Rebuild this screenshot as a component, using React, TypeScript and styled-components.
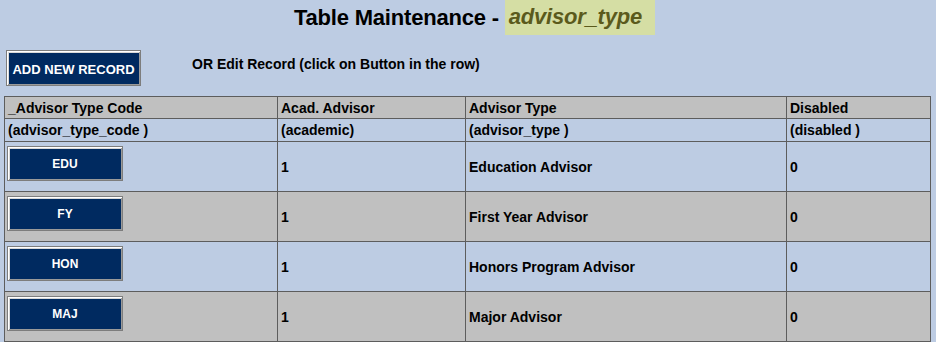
import { styled, createGlobalStyle } from 'styled-components';

const GlobalStyle = createGlobalStyle`
  html, body {
    margin: 0;
    padding: 0;
    background: #bdcce3;
    font-family: 'Liberation Sans', Arial, sans-serif;
  }
`;

type Row = { code: string; academic: string; type: string; disabled: string };

const rows: Row[] = [
  { code: 'EDU', academic: '1', type: 'Education Advisor', disabled: '0' },
  { code: 'FY', academic: '1', type: 'First Year Advisor', disabled: '0' },
  { code: 'HON', academic: '1', type: 'Honors Program Advisor', disabled: '0' },
  { code: 'MAJ', academic: '1', type: 'Major Advisor', disabled: '0' },
];

export default function App() {
  return (
    <>
      <GlobalStyle />
      <Page>
        <Title>
          Table Maintenance - <TableName>advisor_type</TableName>
        </Title>
        <Actions>
          <AddButton>ADD NEW RECORD</AddButton>
          <Hint>OR Edit Record (click on Button in the row)</Hint>
        </Actions>
        <Grid>
          <colgroup>
            <col style={{ width: 273 }} />
            <col style={{ width: 188 }} />
            <col style={{ width: 321 }} />
            <col style={{ width: 144 }} />
          </colgroup>
          <thead>
            <Tr $gray>
              <Th>_Advisor Type Code</Th>
              <Th>Acad. Advisor</Th>
              <Th>Advisor Type</Th>
              <Th>Disabled</Th>
            </Tr>
            <Tr>
              <Th $sub>(advisor_type_code )</Th>
              <Th $sub>(academic)</Th>
              <Th $sub>(advisor_type )</Th>
              <Th $sub>(disabled )</Th>
            </Tr>
          </thead>
          <tbody>
            {rows.map((r, i) => (
              <Tr key={r.code} $gray={i % 2 === 1}>
                <ButtonCell>
                  <RowButton>{r.code}</RowButton>
                </ButtonCell>
                <Td>{r.academic}</Td>
                <Td>{r.type}</Td>
                <Td>{r.disabled}</Td>
              </Tr>
            ))}
          </tbody>
        </Grid>
      </Page>
    </>
  );
}

const Page = styled.div`
  width: 936px;
  height: 342px;
  overflow: hidden;
  padding: 0 0 0 4px;
  box-sizing: border-box;
`;

const Title = styled.h1`
  margin: 0;
  height: 36px;
  display: flex;
  justify-content: center;
  align-items: center;
  padding-left: 9px;
  font-size: 22px;
  font-weight: bold;
  letter-spacing: -0.2px;
  color: #000;
  white-space: pre;
`;

const TableName = styled.span`
  display: flex;
  align-items: center;
  height: 36px;
  padding: 0 13px 0 4px;
  margin-top: -2px;
  background: #d5dea4;
  color: #5b5a1c;
  font-style: italic;
`;

const Actions = styled.div`
  display: flex;
  align-items: center;
  margin-top: 14px;
  height: 36px;
`;

const AddButton = styled.button`
  width: 135px;
  height: 36px;
  margin-left: 2px;
  padding: 2px 0 0 0;
  background: #002a60;
  color: #fff;
  font-family: 'Liberation Sans', Arial, sans-serif;
  font-size: 13px;
  font-weight: bold;
  border: 1px solid #7d7d7d;
  box-shadow: inset 1px 1px 0 #fff, inset -1px -1px 0 #9a9a9a, inset 2px 2px 0 #d8d8d8;
`;

const Hint = styled.span`
  margin-left: 51px;
  margin-top: -8px;
  font-size: 14px;
  font-weight: bold;
`;

const Grid = styled.table`
  margin-top: 10px;
  width: 927px;
  table-layout: fixed;
  border-collapse: collapse;
  border: 1px solid #5d5d5d;
  font-size: 14px;
  font-weight: bold;
`;

const Tr = styled.tr<{ $gray?: boolean }>`
  background: ${(p) => (p.$gray ? '#c0c0c0' : '#bdcce3')};
`;

const Th = styled.th<{ $sub?: boolean }>`
  text-align: left;
  font-weight: bold;
  padding: 3px 3px ${(p) => (p.$sub ? '3px' : '2px')} 3px;
  line-height: 16px;
  border: 1px solid #5d5d5d;
  white-space: nowrap;
`;

const Td = styled.td`
  padding: 3px;
  vertical-align: middle;
  border: 1px solid #5d5d5d;
  line-height: 16px;
`;

const ButtonCell = styled(Td)`
  vertical-align: top;
  padding: 3px 2px;
`;

const RowButton = styled.button`
  display: block;
  width: 116px;
  height: 35px;
  margin: 1px 0 7px 0;
  padding: 0;
  background: #002a60;
  color: #fff;
  font-family: 'Liberation Sans', Arial, sans-serif;
  font-size: 12px;
  font-weight: bold;
  border: 1px solid #7d7d7d;
  box-shadow: inset 1px 1px 0 #fff, inset -1px -1px 0 #9a9a9a, inset 2px 2px 0 #d8d8d8;
`;
